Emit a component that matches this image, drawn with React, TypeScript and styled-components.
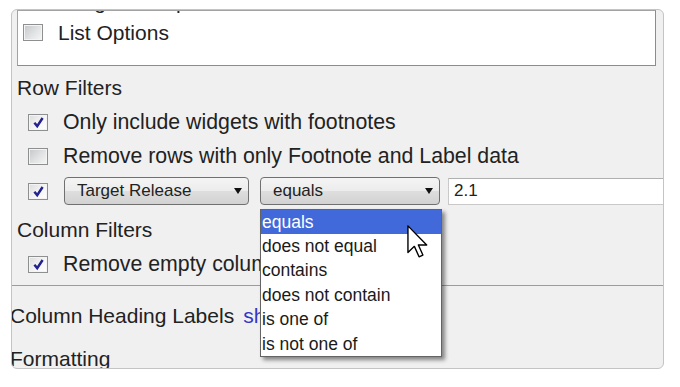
import React from "react";
import styled, { createGlobalStyle } from "styled-components";

const GlobalStyle = createGlobalStyle`
  html, body {
    margin: 0;
    background: #ffffff;
    font-family: "Liberation Sans", Arial, sans-serif;
    color: #222222;
  }
`;

const Page = styled.div`
  padding: 9px 0 0 11px;
  width: 653px;
`;

const Panel = styled.div`
  height: 358px;
  border: 1px solid #c4c4c4;
  border-radius: 6px;
  background: #f0f0f0;
  overflow: hidden;
  display: flex;
  flex-direction: column;
`;

const ListBox = styled.div`
  height: 37px;
  margin: 0 7px 0 5px;
  border: 1px solid #a3a3a3;
  border-right-color: #8c8c8c;
  border-bottom-color: #8c8c8c;
  background: #ffffff;
  overflow: hidden;
  display: flex;
  flex-direction: column;
  justify-content: flex-end;
  padding-bottom: 17px;
  box-sizing: content-box;
  flex-shrink: 0;
`;

const ListRow = styled.div`
  height: 31px;
  flex-shrink: 0;
  display: flex;
  align-items: center;
  gap: 15px;
  padding-left: 5px;
  font-size: 21px;
`;

const Heading = styled.div<{ $gap?: number }>`
  height: 34px;
  margin-top: ${(p) => p.$gap ?? 0}px;
  display: flex;
  align-items: center;
  padding-left: 5px;
  font-size: 21px;
  flex-shrink: 0;
`;

const CheckRow = styled.div<{ $h?: number }>`
  height: ${(p) => p.$h ?? 34}px;
  display: flex;
  align-items: center;
  gap: 15px;
  padding-left: 16px;
  font-size: 21.3px;
  white-space: nowrap;
  flex-shrink: 0;
`;

const FilterRow = styled.div`
  height: 34px;
  margin-bottom: 5px;
  display: flex;
  align-items: center;
  padding-left: 16px;
  flex-shrink: 0;
`;

const Box = styled.span<{ $checked?: boolean }>`
  width: 18px;
  height: 15px;
  flex-shrink: 0;
  border: 1px solid #8e8f8f;
  box-shadow: inset 0 0 0 1px #f4f4f4;
  background: ${(p) =>
    p.$checked
      ? "linear-gradient(135deg, #dcdcdc 0%, #f7f7f7 60%, #ffffff 100%)"
      : "linear-gradient(135deg, #c4c6c9 0%, #e2e3e4 55%, #f6f6f6 100%)"};
  display: flex;
  align-items: center;
  justify-content: center;
`;

const Select = styled.div<{ $w: number }>`
  width: ${(p) => p.$w}px;
  height: 26px;
  box-sizing: content-box;
  border: 1px solid #707070;
  border-radius: 4px;
  background: linear-gradient(#f4f4f4, #ececec 50%, #dedede 51%, #d2d2d2);
  display: flex;
  align-items: center;
  justify-content: space-between;
  padding: 0 6px 0 12px;
  font-size: 17px;
  flex-shrink: 0;
  position: relative;
`;

const Arrow = styled.span`
  width: 0;
  height: 0;
  border-left: 4.5px solid transparent;
  border-right: 4.5px solid transparent;
  border-top: 6px solid #111111;
`;

const Input = styled.div`
  flex: 1;
  height: 25px;
  margin-left: 8px;
  border: 1px solid #c9c9c9;
  border-top-color: #b0b0b0;
  border-right: none;
  background: #ffffff;
  display: flex;
  align-items: center;
  padding-left: 5px;
  font-size: 17px;
`;

const Dropdown = styled.div`
  position: absolute;
  top: 31px;
  left: -1px;
  width: 180px;
  border: 1px solid #646464;
  background: #ffffff;
  box-shadow: 3px 3px 4px rgba(0, 0, 0, 0.45);
  z-index: 5;
`;

const Option = styled.div<{ $active?: boolean }>`
  height: 24.4px;
  display: flex;
  align-items: center;
  padding-left: 1px;
  font-size: 17.5px;
  white-space: nowrap;
  color: ${(p) => (p.$active ? "#ffffff" : "#1a1a1a")};
  background: ${(p) => (p.$active ? "#4169d9" : "transparent")};
`;

const Pointer = styled.svg`
  position: absolute;
  left: 146px;
  top: 15px;
`;

const Divider = styled.div`
  margin-top: 4px;
  border-top: 1px solid #9c9c9c;
  flex-shrink: 0;
`;

const BottomRow = styled.div<{ $top: number }>`
  height: 40px;
  margin-top: ${(p) => p.$top}px;
  margin-left: -2px;
  display: flex;
  align-items: center;
  gap: 9px;
  font-size: 21px;
  white-space: nowrap;
  flex-shrink: 0;
`;

const Link = styled.span`
  color: #3535c8;
`;

const CheckBox = ({ checked }: { checked?: boolean }) => (
  <Box $checked={checked}>
    {checked && (
      <svg width="13" height="13" viewBox="0 0 12 12">
        <path d="M2.2 6.2 L4.8 9.3 L9.8 1.8" fill="none" stroke="#23238f" strokeWidth="2.3" />
      </svg>
    )}
  </Box>
);

const options = ["equals", "does not equal", "contains", "does not contain", "is one of", "is not one of"];

function App() {
  return (
    <Page>
      <GlobalStyle />
      <Panel>
        <ListBox>
          <ListRow>
            <CheckBox />
            <span>Widget Groups</span>
          </ListRow>
          <ListRow>
            <CheckBox />
            <span>List Options</span>
          </ListRow>
        </ListBox>

        <Heading $gap={5}>Row Filters</Heading>
        <CheckRow>
          <CheckBox checked />
          <span>Only include widgets with footnotes</span>
        </CheckRow>
        <CheckRow $h={35}>
          <CheckBox />
          <span>Remove rows with only Footnote and Label data</span>
        </CheckRow>
        <FilterRow>
          <CheckBox checked />
          <Select $w={165} style={{ marginLeft: 16 }}>
            <span>Target Release</span>
            <Arrow />
          </Select>
          <Select $w={160} style={{ marginLeft: 11 }}>
            <span>equals</span>
            <Arrow />
            <Dropdown>
              {options.map((o, i) => (
                <Option key={o} $active={i === 0}>
                  {o}
                </Option>
              ))}
              <Pointer width="21" height="33" viewBox="0 0 12 19">
                <path
                  d="M0.5 0.5 L0.5 15.8 L4.2 12.3 L6.9 18.3 L9.1 17.3 L6.5 11.5 L11.3 11.5 Z"
                  fill="#ffffff"
                  stroke="#000000"
                  strokeWidth="0.8"
                  strokeLinejoin="round"
                />
              </Pointer>
            </Dropdown>
          </Select>
          <Input>2.1</Input>
        </FilterRow>

        <Heading>Column Filters</Heading>
        <CheckRow>
          <CheckBox checked />
          <span>Remove empty columns</span>
        </CheckRow>

        <Divider />
        <BottomRow $top={10}>
          <span>Column Heading Labels</span>
          <Link>show</Link>
        </BottomRow>
        <BottomRow $top={3}>
          <span>Formatting</span>
        </BottomRow>
      </Panel>
    </Page>
  );
}

export default App;
